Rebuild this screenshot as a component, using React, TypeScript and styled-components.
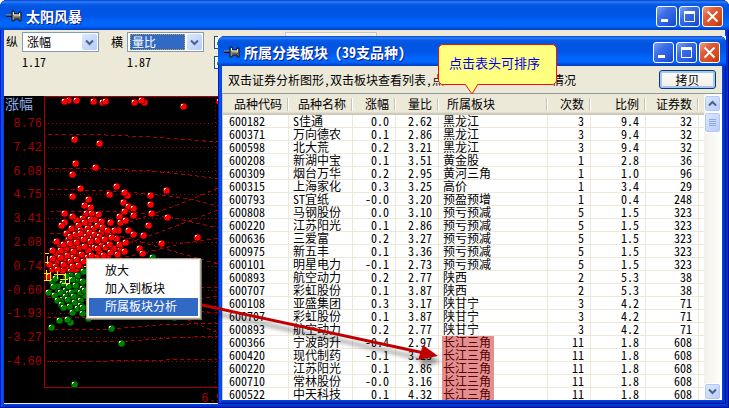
import React from 'react';
import styled, { createGlobalStyle, css } from 'styled-components';

const GlobalStyle = createGlobalStyle`
  * { box-sizing: border-box; }
  body {
    margin: 0;
    background: #fff;
    color: #000;
    font: 12px/14px "Noto Sans CJK SC", "Liberation Sans", sans-serif;
    font-feature-settings: "hwid";
    overflow: hidden;
  }
  button, select, input { font: inherit; color: inherit; margin: 0; padding: 0; }
`;

const windowFrame = css`
  display: flex;
  flex-direction: column;
  overflow: hidden;
  border-radius: 7px 7px 0 0;
  background: #0046e0;
  padding: 0 4px 4px;
  box-shadow: inset 1px 0 #0019cf, inset -1px 0 #00138c, inset 0 -1px #00138c,
    inset 3px 0 #0a4fe8, inset -3px 0 #0030cf, inset 0 -3px #0030cf;
`;

const Desktop = styled.div`
  position: relative;
  display: flex;
  min-height: 100vh;
`;

const MainWindow = styled.section`
  ${windowFrame}
  flex: 1;
  min-width: 0;
`;

const ChildCorner = styled.div`
  position: absolute;
  left: 218px;
  right: 3px;
  top: 36px;
  bottom: 4px;
  display: flex;
  background: linear-gradient(#fff, #fff) top / 100% 6px no-repeat;
`;

const ChildWindow = styled.section`
  ${windowFrame}
  flex: 1;
  min-width: 0;
`;

const TitleBar = styled.header`
  flex: none;
  display: flex;
  align-items: center;
  gap: 4px;
  height: 30px;
  margin: 0 -4px;
  padding: 2px 6px 0;
  background: linear-gradient(
    #0a40d0 0, #2a82f6 2px, #0a5ce8 4px, #0054e0 8px, #0056e8 16px, #0065fb 22px, #0066ff 26px, #0050d8 28px, #003cc0 30px
  );
`;

const Title = styled.h1`
  flex: 1;
  margin: 0;
  color: #fff;
  font-size: 14px;
  line-height: 18px;
  font-weight: 700;
  white-space: pre;
  text-shadow: 1px 1px #0a1883;
`;

const CaptionButtons = styled.div`
  display: flex;
  gap: 2px;
`;

const CaptionButton = styled.button<{ $close?: boolean }>`
  display: grid;
  place-items: center;
  width: 21px;
  height: 21px;
  border: 1px solid #fff;
  border-radius: 3px;
  background: ${(p) =>
    p.$close
      ? 'linear-gradient(135deg, #f0a088 0, #e05a34 35%, #d8481c 75%, #b83008 100%)'
      : 'linear-gradient(135deg, #7ea2f4 0, #3c6fe8 35%, #2458e0 75%, #1a44bc 100%)'};
`;

const FormArea = styled.div`
  flex: none;
  height: 66px;
  padding: 2px 2px 0;
  background: #ece9d8;
  display: grid;
  grid-template-columns: 16px 77px 12px 12px 4px 77px 10px 13px 58px 92px;
  grid-template-rows: 20px 20px;
  align-items: center;
  overflow: hidden;
`;

const FieldLabel = styled.label<{ $column: number }>`
  grid-row: 1;
  grid-column: ${(p) => p.$column};
`;

const Reading = styled.output<{ $column: number }>`
  grid-row: 2;
  grid-column: ${(p) => p.$column};
`;

const Field = styled.div<{ $column: number; $muted?: boolean }>`
  grid-row: 1;
  grid-column: ${(p) => p.$column};
  display: flex;
  height: 20px;
  padding: 1px;
  border: 1px solid ${(p) => (p.$muted ? '#c9c7ba' : '#7f9db9')};
  background: ${(p) => (p.$muted ? '#f5f4ea' : '#fff')};
`;

const FieldSelect = styled.select<{ $active?: boolean }>`
  flex: 1;
  min-width: 0;
  margin: 0 2px 0 1px;
  padding: 0 1px;
  appearance: none;
  border: 1px ${(p) => (p.$active ? 'dotted #ce9539' : 'solid transparent')};
  background: ${(p) => (p.$active ? '#316ac5' : 'transparent')};
  color: ${(p) => (p.$active ? '#fff' : '#000')};
  line-height: 14px;
`;

const ArrowBox = styled.span<{ $muted?: boolean }>`
  flex: none;
  display: grid;
  place-items: center;
  width: 15px;
  border-radius: 2px;
  background: ${(p) => (p.$muted ? '#eeede5' : 'linear-gradient(135deg, #dce7ff, #b5cbf8)')};
`;

const Check = styled.input<{ $row: number }>`
  grid-column: 8;
  grid-row: ${(p) => p.$row};
  appearance: none;
  width: 13px;
  height: 13px;
  border: 1px solid #1c5180;
  background:
    linear-gradient(#21a121, #21a121) 2px 5px / 2px 3px no-repeat,
    #f8f8f5;
`;

const Chart = styled.svg`
  display: block;
  flex: 1;
  width: 100%;
  min-height: 0;
  background: #000;
  border-bottom: 1px solid #ece9d8;
`;

const ToolRow = styled.div`
  flex: none;
  display: flex;
  align-items: center;
  height: 27px;
  padding: 0 6px;
  background: #ece9d8;
  white-space: nowrap;
`;

const HintStart = styled.span`
  margin-right: 108px;
`;

const HintEnd = styled.span`
  flex: 1;
`;

const CopyButton = styled.button`
  width: 57px;
  height: 19px;
  border: 1px solid #003c74;
  border-radius: 3px;
  background: linear-gradient(#fdfdfb, #f0eee4);
  box-shadow: inset 0 0 0 2px #a9c3f2;
  line-height: 16px;
`;

const ListArea = styled.div`
  flex: 1;
  min-height: 0;
  display: flex;
  background: #fff;
  border-top: 1px solid #8f9c9e;
  border-left: 1px solid #c5c8c2;
  overflow: hidden;
`;

const TableClip = styled.div`
  flex: 1;
  min-width: 0;
`;

const Table = styled.table`
  width: 100%;
  table-layout: fixed;
  border-collapse: separate;
  border-spacing: 0;
`;

const HeadCell = styled.th<{ $align?: string }>`
  height: 21px;
  padding: 0 7px 2px 8px;
  font-weight: 400;
  line-height: 16px;
  white-space: nowrap;
  text-align: ${(p) => p.$align ?? 'right'};
  background:
    linear-gradient(#c8c4b4, #c8c4b4) right 1px top 4px / 1px 13px no-repeat,
    linear-gradient(#fff, #fff) right 0 top 4px / 1px 13px no-repeat,
    linear-gradient(#ece9d8 18px, #d6d2c2 19px, #c5c2b2 21px);
  &:last-child {
    padding: 0;
    background: linear-gradient(#ece9d8 18px, #d6d2c2 19px, #c5c2b2 21px);
  }
`;

const Cell = styled.td<{ $left?: boolean }>`
  height: 13px;
  padding: 0 6px 0 ${(p) => (p.$left ? '4px' : '0')};
  border-right: 1px solid #ece9d8;
  border-bottom: 1px solid #ece9d8;
  line-height: 12px;
  white-space: nowrap;
  text-align: ${(p) => (p.$left ? 'left' : 'right')};
  &:first-child { padding-left: 6px; }
  &:last-child { padding: 0; border-right: 0; }
`;

const Marked = styled.mark`
  display: block;
  width: 52px;
  margin: 0 0 -1px -1px;
  padding: 0 0 1px 1px;
  background: #e38f8f;
  color: #560000;
`;

const ScrollTrack = styled.div`
  flex: none;
  display: flex;
  flex-direction: column;
  width: 18px;
  padding: 1px 1px 0 0;
  background: linear-gradient(90deg, #f3f1ec, #fefefb);
`;

const ScrollButton = styled.button`
  display: grid;
  place-items: center;
  width: 17px;
  height: 17px;
  border: 1px solid #fff;
  border-radius: 3px;
  box-shadow: inset 0 0 0 1px #b4c8f6;
  background: linear-gradient(135deg, #dce8ff, #b8ccf9);
`;

const Thumb = styled(ScrollButton)`
  height: 21px;
  margin-bottom: auto;
`;

const CalloutBox = styled.div`
  position: absolute;
  left: 438px;
  top: 44px;
  width: 119px;
  height: 41px;
  display: grid;
  place-items: center;
  padding: 0 6px 4px 0;
  border: 1px solid #f01010;
  border-radius: 5px;
  background: #ffff80;
  color: #0000f0;
  font-size: 13px;
  line-height: 16px;
`;

const Tail = styled.svg`
  position: absolute;
  left: 25px;
  top: 38px;
`;

const Menu = styled.div`
  position: absolute;
  left: 86px;
  top: 258px;
  width: 115px;
  padding: 3px 2px 2px;
  border: 1px solid #aca899;
  background: #fff;
  box-shadow: inset 0 0 0 1px #ece9d8, 1px 1px #716f64;
`;

const MenuItem = styled.button<{ $active?: boolean }>`
  display: block;
  width: 100%;
  height: 18px;
  padding: 0 0 2px 16px;
  border: 0;
  text-align: left;
  line-height: 16px;
  background: ${(p) => (p.$active ? '#316ac5' : 'transparent')};
  color: ${(p) => (p.$active ? '#fff' : '#000')};
`;

const Pointer = styled.svg`
  position: absolute;
  left: 196px;
  top: 300px;
  pointer-events: none;
`;

function PinIcon() {
  return (
    <svg width="16" height="12" viewBox="0 0 16 12" aria-hidden="true">
      <path d="M0 6h6" stroke="#101820" strokeWidth="2" />
      <path d="M0 5h6" stroke="#9aa0a0" />
      <path d="M6 1h2v2l2 1h3V2h2v9h-2V9h-3l-2 1v1H6z" fill="#8c8c80" stroke="#101010" />
      <path d="M8 5h6M7.500 2v3M13.500 3v3" stroke="#e8e8e0" />
      <path d="M8 8h6" stroke="#404038" />
    </svg>
  );
}

function Caption() {
  return (
    <CaptionButtons>
      <CaptionButton aria-label="最小化">
        <svg width="15" height="15"><path d="M2 10h7v3H2z" fill="#fff" /></svg>
      </CaptionButton>
      <CaptionButton aria-label="最大化">
        <svg width="15" height="15"><path d="M2.500 3v9.500h10V3" fill="none" stroke="#fff" /><path d="M2 2h11v3H2z" fill="#fff" /></svg>
      </CaptionButton>
      <CaptionButton aria-label="关闭" $close>
        <svg width="15" height="15"><path d="M2.500 2.500l10 10m0-10l-10 10" stroke="#fff" strokeWidth="2" /></svg>
      </CaptionButton>
    </CaptionButtons>
  );
}

function Chevron({ up, muted }: { up?: boolean; muted?: boolean }) {
  return (
    <svg width="9" height="7" viewBox="0 0 9 7" aria-hidden="true">
      <path d={up ? 'M1 5.500l3.500-3.500L8 5.500' : 'M1 1.500l3.500 3.500L8 1.500'} fill="none" stroke={muted ? '#c9c7ba' : '#4d6185'} strokeWidth="2" />
    </svg>
  );
}

const axis: [string, number][] = [
  ['8.76', 123], ['7.42', 147], ['6.08', 171], ['4.75', 194], ['3.41', 218], ['2.08', 242],
  ['0.74', 266], ['-0.60', 290], ['-1.93', 313], ['-3.27', 337], ['-4.60', 361],
];

const trends = [
  'M48 134H84L150 137L218 142', 'M48 168H84L150 171L190 175L218 179', 'M50 189L110 191L150 194L190 199L218 206',
  'M50 211L130 212L170 217L218 228', 'M218 188L180 204L130 222L90 238', 'M218 238L180 244L140 254L100 262',
  'M50 233L120 236L218 264', 'M218 210L160 232L120 246', 'M200 287H218', 'M47 330L110 329L160 325L218 323',
  'M47 342L130 341L170 338L218 336', 'M47 361H110L218 359', 'M174 317L190 321L218 333', 'M47 317H90L218 296', 'M47 297L90 301L218 313',
];

const rising: [number, number][] = [
  [68, 100], [64, 101], [76, 100], [93, 101], [102, 102], [105, 101], [134, 102], [144, 102], [141, 100], [183, 106], [219, 101],
  [74, 139], [99, 143], [75, 163], [95, 167], [72, 174], [80, 188], [116, 186], [109, 194], [127, 195], [124, 192], [166, 190],
  [150, 195], [72, 196], [88, 199], [84, 205], [90, 207], [123, 202], [128, 206], [133, 208], [124, 211], [150, 204], [151, 213],
  [119, 216], [133, 215], [64, 213], [72, 216], [91, 213], [98, 214], [61, 225], [110, 222], [120, 222], [125, 220], [148, 225],
  [167, 217], [197, 237], [161, 243], [143, 235], [128, 230], [133, 234], [139, 248], [142, 253], [90, 219], [84, 222], [78, 225],
  [71, 228], [80, 230], [87, 228], [97, 225], [102, 227], [107, 230], [114, 230], [66, 233], [70, 236], [75, 234], [80, 233],
  [89, 232], [94, 234], [99, 236], [105, 238], [111, 237], [56, 241], [63, 244], [69, 243], [76, 242], [83, 239], [90, 241],
  [97, 240], [104, 239], [109, 244], [119, 244], [125, 242], [124, 251], [117, 254], [110, 252], [52, 250], [60, 250], [67, 255],
  [73, 251], [81, 254], [88, 250], [94, 247], [97, 248], [103, 255], [96, 257], [91, 255], [84, 246], [52, 258], [60, 257],
  [63, 264], [70, 261], [76, 259], [83, 261], [55, 266], [49, 264], [57, 269], [70, 271], [72, 266], [78, 265], [48, 276],
];

const risingCore: [number, number][] = [
  [86, 213], [94, 219], [82, 218], [76, 220], [88, 224], [93, 228], [101, 221], [64, 222], [74, 230], [84, 233], [68, 239],
  [73, 239], [79, 237], [86, 236], [92, 238], [101, 232], [108, 234], [116, 238], [60, 245], [66, 248], [72, 247], [79, 247],
  [87, 245], [91, 246], [101, 245], [105, 247], [113, 248], [56, 253], [64, 253], [77, 254], [84, 256], [99, 252], [107, 256],
  [56, 261], [67, 267], [63, 259], [73, 257], [80, 268], [62, 270], [75, 270], [87, 257], [52, 269], [120, 249], [118, 230],
];

const falling: [number, number][] = [
  [58, 290], [65, 290], [76, 289], [82, 288], [68, 293], [77, 297], [62, 299], [70, 302], [84, 295], [52, 281], [70, 275], [78, 280],
  [152, 257], [83, 271], [77, 275], [82, 281], [72, 279], [62, 283], [55, 278], [66, 276], [57, 286], [53, 286], [48, 292],
  [68, 286], [75, 285], [80, 292], [71, 292], [60, 292], [54, 295], [65, 296], [73, 296], [80, 300], [57, 300], [67, 299],
  [74, 302], [61, 304], [69, 306], [80, 305], [63, 307], [72, 312], [82, 313], [77, 308], [88, 318], [82, 307], [51, 327],
  [59, 320], [70, 322], [67, 319], [111, 328], [121, 343], [74, 384], [174, 317], [84, 290],
];

function Ball({ x, y, color }: { x: number; y: number; color: string }) {
  return (
    <g>
      <circle cx={x + 0.5} cy={y + 0.5} r="3.800" fill="#000" />
      <circle cx={x + 0.5} cy={y + 0.5} r="3.300" fill={color} />
      <path d={`M${x - 2} ${y - 2}h2v1h-1v1h-1z`} fill="#e8d8d0" />
    </g>
  );
}

function Scatter() {
  return (
    <Chart role="img" aria-label="涨幅 量比">
      <g transform="translate(-4 -96)">
        <g fill="#a80000" fontFamily="Liberation Mono, monospace" fontSize="12" textAnchor="end">
          {axis.map(([label, y]) => <text key={label} x="42" y={y + 4}>{label}</text>)}
          <text x="230" y="402">6.98</text>
        </g>
        <text x="5" y="109" fill="#8cace8" fontSize="14">涨幅</text>
        <path d="M44.500 387V96.500H725M44 387.500H725" fill="none" stroke="#a80000" />
        <g fill="none" stroke="#a80000" shapeRendering="crispEdges">
          {axis.map(([label, y]) => <path key={label} d={`M48 ${y}.500H218`} strokeDasharray="1 3" />)}
          <path d="M215.500 98V387" strokeDasharray="1 3" />
          {trends.map((d) => <path key={d} d={d} strokeDasharray="4 3" />)}
        </g>
        {[...risingCore, ...rising].map(([x, y], i) => <Ball key={i} x={x} y={y} color="#ff0000" />)}
        {falling.map(([x, y], i) => <Ball key={i} x={x} y={y} color="#008000" />)}
        <path
          d="M45 253.500h4M47.500 256v8M45 262.500h4M46.500 270v10M44 273.500h7M44 280.500h7M50.500 272v9M57.500 271v8M54 274.500h12M60 279.500h8M65.500 273v10M62 283.500h8M69.500 277v6M84 266.500h3"
          stroke="#f8f000"
          fill="none"
        />
      </g>
    </Chart>
  );
}

const columns: [string, number | undefined, string][] = [
  ['品种代码', 66, 'right'], ['品种名称', 64, 'right'], ['涨幅', 43, 'right'], ['量比', 43, 'right'], ['所属板块', undefined, 'left'],
  ['次数', 43, 'right'], ['比例', 55, 'right'], ['证券数', 53, 'right'], ['', 5, 'right'],
];

const rows: string[][] = [
  ['600182', 'S佳通', '0.0', '2.62', '黑龙江', '3', '9.4', '32'],
  ['600371', '万向德农', '0.1', '2.86', '黑龙江', '3', '9.4', '32'],
  ['600598', '北大荒', '0.2', '3.21', '黑龙江', '3', '9.4', '32'],
  ['600208', '新湖中宝', '0.1', '3.51', '黄金股', '1', '2.8', '36'],
  ['600309', '烟台万华', '0.2', '2.95', '黄河三角', '1', '1.0', '96'],
  ['600315', '上海家化', '0.3', '3.25', '高价', '1', '3.4', '29'],
  ['600793', 'ST宜纸', '-0.0', '3.20', '预盈预增', '1', '0.4', '248'],
  ['600808', '马钢股份', '0.0', '3.10', '预亏预减', '5', '1.5', '323'],
  ['600220', '江苏阳光', '0.1', '2.86', '预亏预减', '5', '1.5', '323'],
  ['600636', '三爱富', '0.2', '3.27', '预亏预减', '5', '1.5', '323'],
  ['600975', '新五丰', '0.1', '3.36', '预亏预减', '5', '1.5', '323'],
  ['600101', '明星电力', '-0.1', '2.73', '预亏预减', '5', '1.5', '323'],
  ['600893', '航空动力', '0.2', '2.77', '陕西', '2', '5.3', '38'],
  ['600707', '彩虹股份', '0.1', '3.87', '陕西', '2', '5.3', '38'],
  ['600108', '亚盛集团', '0.3', '3.17', '陕甘宁', '3', '4.2', '71'],
  ['600707', '彩虹股份', '0.1', '3.87', '陕甘宁', '3', '4.2', '71'],
  ['600893', '航空动力', '0.2', '2.77', '陕甘宁', '3', '4.2', '71'],
  ['600366', '宁波韵升', '-0.4', '2.97', '长江三角', '11', '1.8', '608'],
  ['600420', '现代制药', '-0.1', '3.13', '长江三角', '11', '1.8', '608'],
  ['600220', '江苏阳光', '0.1', '2.86', '长江三角', '11', '1.8', '608'],
  ['600710', '常林股份', '-0.0', '3.16', '长江三角', '11', '1.8', '608'],
  ['600522', '中天科技', '0.1', '4.32', '长江三角', '11', '1.8', '608'],
];

function SectorTable() {
  return (
    <Table>
      <colgroup>
        {columns.map(([name, width]) => <col key={name} width={width} />)}
      </colgroup>
      <thead>
        <tr>{columns.map(([name, , align]) => <HeadCell key={name} $align={align}>{name}</HeadCell>)}</tr>
      </thead>
      <tbody>
        {rows.map((row, r) => (
          <tr key={r}>
            {row.map((value, c) => (
              <Cell key={c} $left={c < 2 || c === 4}>
                {value === '长江三角' ? <Marked>{value}</Marked> : value}
              </Cell>
            ))}
            <Cell />
          </tr>
        ))}
      </tbody>
    </Table>
  );
}

export default function App() {
  return (
    <Desktop>
      <GlobalStyle />
      <MainWindow>
        <TitleBar>
          <PinIcon />
          <Title>太阳风暴</Title>
          <Caption />
        </TitleBar>
        <FormArea>
          <FieldLabel $column={1} htmlFor="vertical">纵</FieldLabel>
          <Field $column={2}>
            <FieldSelect id="vertical"><option>涨幅</option></FieldSelect>
            <ArrowBox><Chevron /></ArrowBox>
          </Field>
          <FieldLabel $column={4} htmlFor="horizontal">横</FieldLabel>
          <Field $column={6}>
            <FieldSelect id="horizontal" $active><option>量比</option></FieldSelect>
            <ArrowBox><Chevron /></ArrowBox>
          </Field>
          <Check type="checkbox" $row={1} defaultChecked aria-label="选项一" />
          <Field $column={10} $muted>
            <FieldSelect disabled aria-label="选项" />
            <ArrowBox $muted><Chevron muted /></ArrowBox>
          </Field>
          <Reading $column={2}>1.17</Reading>
          <Reading $column={6}>1.87</Reading>
          <Check type="checkbox" $row={2} defaultChecked aria-label="选项二" />
        </FormArea>
        <Scatter />
      </MainWindow>

      <ChildCorner>
        <ChildWindow>
          <TitleBar>
            <PinIcon />
            <Title>所属分类板块 (39支品种)</Title>
            <Caption />
          </TitleBar>
          <ToolRow>
            <HintStart>双击证券分析图形,双击板块查看列表,点</HintStart>
            <HintEnd>情况</HintEnd>
            <CopyButton>拷贝</CopyButton>
          </ToolRow>
          <ListArea>
            <TableClip><SectorTable /></TableClip>
            <ScrollTrack>
              <ScrollButton aria-label="向上"><Chevron up /></ScrollButton>
              <Thumb aria-label="滚动">
                <svg width="7" height="8"><path d="M0 .500h7M0 2.500h7M0 4.500h7M0 6.500h7" stroke="#8ca6e8" /></svg>
              </Thumb>
              <ScrollButton aria-label="向下"><Chevron /></ScrollButton>
            </ScrollTrack>
          </ListArea>
        </ChildWindow>
      </ChildCorner>

      <CalloutBox>
        点击表头可排序
        <Tail width="16" height="12">
          <path d="M0 0L8 11L15 0z" fill="#ffff80" />
          <path d="M1 1L8 11L14 1" fill="none" stroke="#f01010" />
        </Tail>
      </CalloutBox>

      <Menu role="menu">
        <MenuItem role="menuitem">放大</MenuItem>
        <MenuItem role="menuitem">加入到板块</MenuItem>
        <MenuItem role="menuitem" $active>所属板块分析</MenuItem>
      </Menu>

      <Pointer width="250" height="76" aria-hidden="true">
        <defs>
          <filter id="soft" x="-10%" y="-10%" width="120%" height="130%"><feGaussianBlur stdDeviation="2" /></filter>
        </defs>
        <g transform="translate(2 6)" opacity=".4" filter="url(#soft)">
          <path d="M6 5L226 53" stroke="#000" strokeWidth="3" />
          <path d="M225 45L243 56L222 61z" />
        </g>
        <path d="M6 5L228 53" stroke="#c00000" strokeWidth="3" />
        <path d="M227 45L242 56L222 60z" fill="#c00000" />
      </Pointer>
    </Desktop>
  );
}
